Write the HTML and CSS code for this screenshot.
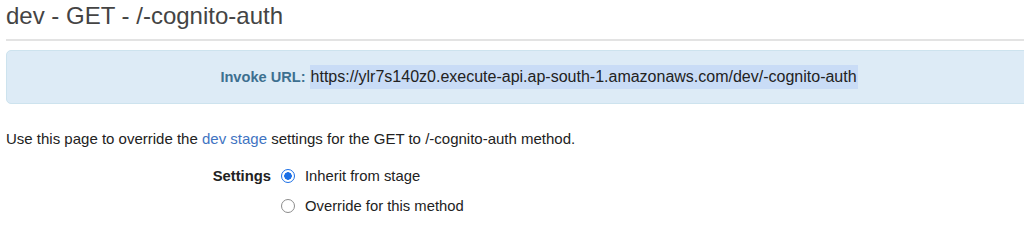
FILE: index.html
```html
<!DOCTYPE html>
<html>
<head>
<meta charset="utf-8">
<link rel="stylesheet" href="styles.css">
</head>
<body>
<div class="page">
  <h1 class="title">dev - GET - /-cognito-auth</h1>
  <div class="rule"></div>
  <div class="alert">
    <span class="label">Invoke URL:</span> <span class="url">https://ylr7s140z0.execute-api.ap-south-1.amazonaws.com/dev/-cognito-auth</span>
  </div>
  <p class="intro">Use this page to override the <a class="link" href="#">dev stage</a> settings for the GET to /-cognito-auth method.</p>
  <div class="settings">
    <div class="field-label">Settings</div>
    <div class="options">
      <label class="option"><span class="radio checked"></span>Inherit from stage</label>
      <label class="option"><span class="radio"></span>Override for this method</label>
    </div>
  </div>
</div>
</body>
</html>
```

FILE: styles.css
```css
html, body {
  margin: 0;
  padding: 0;
  background: #fff;
  overflow: hidden;
}
body {
  font-family: "Liberation Sans", Arial, sans-serif;
  color: #333;
}
.page {
  width: 1066px;
  padding-left: 6px;
}
.title {
  margin: 0;
  padding-top: 1px;
  font-size: 24px;
  font-weight: normal;
  line-height: 30px;
  color: #444;
}
.rule {
  margin-top: 8px;
  height: 2px;
  background: #e3e3e3;
}
.alert {
  margin-top: 9px;
  height: 54px;
  box-sizing: border-box;
  border: 1px solid #cde3ee;
  border-radius: 5px;
  background: #ddebf6;
  display: flex;
  align-items: center;
  justify-content: center;
  gap: 4px;
}
.label {
  font-size: 14.6px;
  font-weight: bold;
  color: #3d7090;
}
.url {
  font-size: 16px;
  background: #c9dcf6;
  color: #222;
  padding: 3px 1px;
  line-height: 18px;
}
.intro {
  margin: 26px 0 0 0;
  font-size: 15px;
  line-height: 18px;
  color: #222;
}
.link {
  color: #3f74c2;
  text-decoration: none;
}
.settings {
  display: flex;
  margin-top: 19px;
  font-size: 14.8px;
}
.field-label {
  width: 265px;
  text-align: right;
  font-weight: bold;
  color: #222;
  line-height: 18px;
}
.options {
  display: flex;
  flex-direction: column;
  gap: 12px;
  padding-left: 10px;
}
.option {
  display: flex;
  align-items: center;
  line-height: 18px;
  color: #222;
}
.radio {
  width: 14px;
  height: 14px;
  box-sizing: border-box;
  border-radius: 50%;
  border: 1px solid #8c8c8c;
  background: #fff;
  margin-right: 10px;
}
.radio.checked {
  border: 1px solid #1b6fe6;
  background: radial-gradient(circle, #1b6fe6 0 3.5px, #fff 4px);
}
```
